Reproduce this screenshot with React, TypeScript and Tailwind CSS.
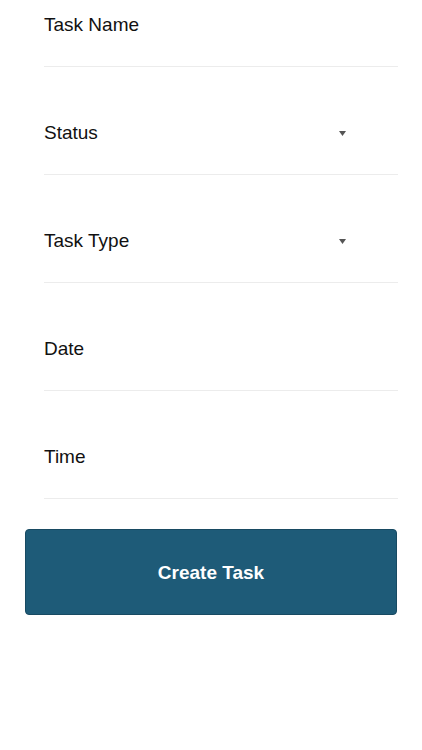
import React from "react";

type Field = { label: string; select?: boolean };

const fields: Field[] = [
  { label: "Task Name" },
  { label: "Status", select: true },
  { label: "Task Type", select: true },
  { label: "Date" },
  { label: "Time" },
];

const Caret: React.FC = () => (
  <svg width="7" height="5" viewBox="0 0 7 5" className="mr-[52px]">
    <path d="M0 0 L7 0 L3.5 5 Z" fill="#555" />
  </svg>
);

const App: React.FC = () => {
  return (
    <div className="min-h-[750px] w-full bg-white font-['Liberation_Sans',Arial,sans-serif]">
      <form className="flex flex-col">
        <div className="pl-[44px] pr-[24px]">
          {fields.map((field, index) => (
            <div
              key={field.label}
              className={`flex items-center justify-between border-b border-[#ececec] pb-[30px] ${
                index === 0 ? "pt-[14px]" : "pt-[55px]"
              }`}
            >
              <span className="text-[19px] leading-[22px] text-[#111]">
                {field.label}
              </span>
              {field.select && <Caret />}
            </div>
          ))}
        </div>

        <div className="pl-[25px] pr-[25px] pt-[30px]">
          <button
            type="button"
            className="flex h-[86px] w-full items-center justify-center rounded-[4px] border border-[#184a62] bg-[#1e5b78] pt-[2px] text-[19px] font-bold text-white"
          >
            Create Task
          </button>
        </div>
      </form>
    </div>
  );
};

export default App;
